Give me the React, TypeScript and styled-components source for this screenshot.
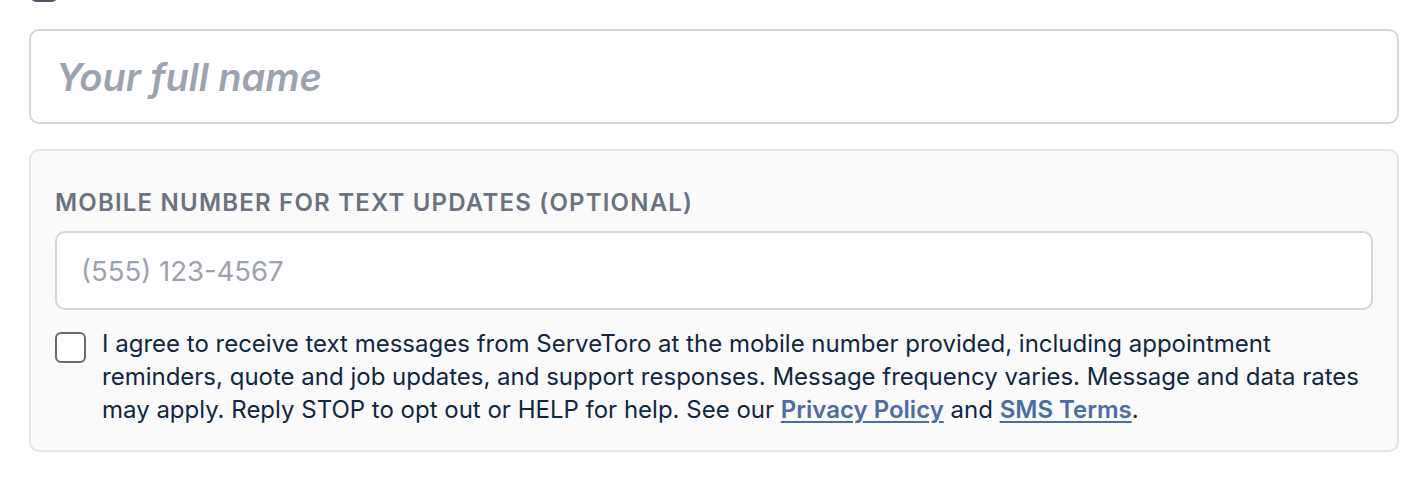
import styled, { createGlobalStyle } from "styled-components";

const GlobalStyle = createGlobalStyle`
	html, body {
		margin: 0;
		padding: 0;
		background: #ffffff;
		font-family: Inter, "Noto Sans", "Liberation Sans", sans-serif;
	}
	* {
		box-sizing: border-box;
	}
`;

const Page = styled.div`
	padding: 0 29px;
	display: flex;
	flex-direction: column;
`;

const ClippedRow = styled.div`
	display: flex;
	align-items: flex-end;
	margin-top: -25px;
	height: 27px;
	padding-left: 2px;
`;

const TopBox = styled.span`
	width: 26px;
	height: 26px;
	border: 2px solid #4b5563;
	border-radius: 5px;
`;

const NameInput = styled.input`
	margin-top: 27px;
	width: 100%;
	height: 95px;
	border: 2px solid #d4d6db;
	border-radius: 10px;
	padding: 0 25px;
	font-family: inherit;
	font-size: 38px;
	font-weight: 600;
	font-style: italic;
	color: #111827;
	background: #ffffff;
	outline: none;

	&::placeholder {
		color: #9ca3af;
	}
`;

const SmsPanel = styled.div`
	margin-top: 25px;
	background: #fafafa;
	border: 2px solid #e5e5e5;
	border-radius: 10px;
	padding: 36px 24px 24px;
	display: flex;
	flex-direction: column;
`;

const FieldLabel = styled.label`
	font-size: 24px;
	line-height: 32px;
	font-weight: 600;
	letter-spacing: 1.2px;
	text-transform: uppercase;
	color: #6b7280;
`;

const PhoneInput = styled.input`
	margin-top: 12px;
	width: 100%;
	height: 79px;
	border: 2px solid #d4d6db;
	border-radius: 10px;
	padding: 0 24px;
	font-family: inherit;
	font-size: 27.5px;
	font-weight: 400;
	color: #111827;
	background: #ffffff;
	outline: none;

	&::placeholder {
		color: #9ca3af;
	}
`;

const ConsentRow = styled.label`
	margin-top: 17px;
	display: flex;
	align-items: flex-start;
	gap: 16px;
`;

const ConsentBox = styled.input.attrs({ type: "checkbox" })`
	appearance: none;
	flex: none;
	margin: 5px 0 0;
	width: 31px;
	height: 31px;
	border: 2px solid #6b6b6b;
	border-radius: 6px;
	background: #ffffff;
`;

const ConsentText = styled.p`
	margin: 0;
	font-size: 24px;
	line-height: 33px;
	color: #0f2742;
`;

const TextLink = styled.a`
	color: #4a6da6;
	font-weight: 600;
	text-decoration: underline;
	text-underline-offset: 3px;
`;

export default function App() {
	return (
		<>
			<GlobalStyle />
			<Page>
				<ClippedRow>
					<TopBox />
				</ClippedRow>
				<NameInput placeholder="Your full name" />
				<SmsPanel>
					<FieldLabel>Mobile number for text updates (optional)</FieldLabel>
					<PhoneInput type="tel" placeholder="(555) 123-4567" />
					<ConsentRow>
						<ConsentBox />
						<ConsentText>
							I agree to receive text messages from ServeToro at the mobile
							number provided, including appointment reminders, quote and job
							updates, and support responses. Message frequency varies. Message
							and data rates may apply. Reply STOP to opt out or HELP for help.
							See our <TextLink href="#">Privacy Policy</TextLink> and{" "}
							<TextLink href="#">SMS Terms</TextLink>.
						</ConsentText>
					</ConsentRow>
				</SmsPanel>
			</Page>
		</>
	);
}
